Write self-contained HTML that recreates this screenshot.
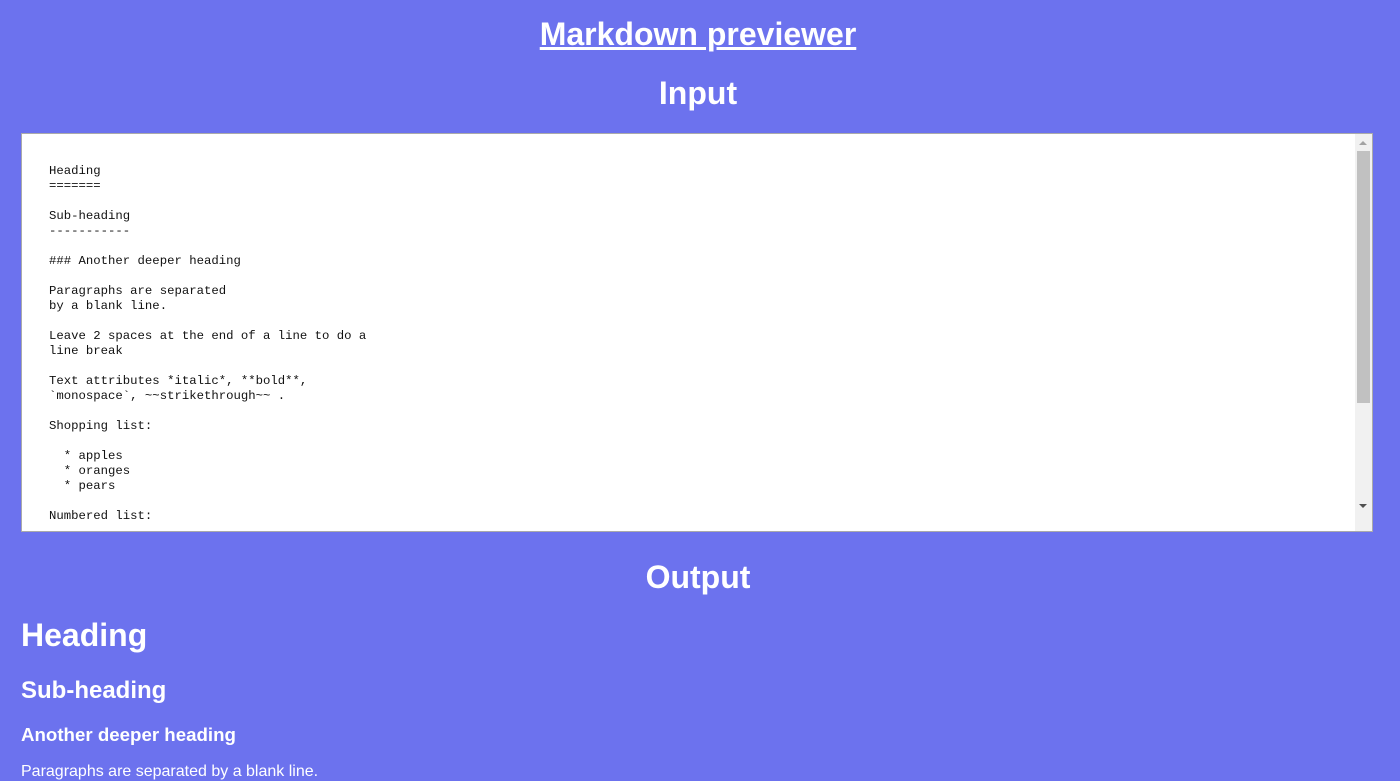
<!DOCTYPE html>
<html><head><style>
body{margin:0;background:#6c72ee;font-family:"Liberation Sans",sans-serif;color:#fff;width:1400px;height:780px;overflow:hidden;position:relative}
.a{position:absolute;left:-2px;width:1400px;text-align:center;font-weight:bold;margin:0}
.box{position:absolute;left:21px;top:133px;width:1350px;height:397px;background:#fff;border:1px solid #aaa;overflow:hidden}
pre{margin:0;position:absolute;left:27px;top:30px;font-family:"Liberation Mono",monospace;font-size:12.3px;line-height:15px;color:#111}
.sb{position:absolute;right:0;top:0;width:17px;height:397px;background:#f1f1f1}
.th{position:absolute;left:2px;top:17px;width:13px;height:252px;background:#c1c1c1}
.o{position:absolute;left:21px;margin:0;font-weight:bold}
</style></head><body>
<div class="a" style="top:16px;font-size:32px;text-decoration:underline">Markdown previewer</div>
<div class="a" style="top:75px;font-size:32px">Input</div>
<div class="box"><pre>Heading
=======

Sub-heading
-----------

### Another deeper heading

Paragraphs are separated
by a blank line.

Leave 2 spaces at the end of a line to do a
line break

Text attributes *italic*, **bold**,
`monospace`, ~~strikethrough~~ .

Shopping list:

  * apples
  * oranges
  * pears

Numbered list:</pre>
<div class="sb"><div class="th"></div>
<div style="position:absolute;left:4px;top:7px;border:4px solid transparent;border-bottom:4px solid #a3a3a3;border-top:0"></div>
<div style="position:absolute;left:4px;top:370px;border:4px solid transparent;border-top:4px solid #505050;border-bottom:0"></div>
</div></div>
<div class="a" style="top:559px;font-size:32px">Output</div>
<div class="o" style="top:617px;font-size:32px">Heading</div>
<div class="o" style="top:677px;font-size:24px">Sub-heading</div>
<div class="o" style="top:724px;font-size:18.7px">Another deeper heading</div>
<div class="o" style="top:763px;font-size:16px;font-weight:normal">Paragraphs are separated by a blank line.</div>
</body></html>
